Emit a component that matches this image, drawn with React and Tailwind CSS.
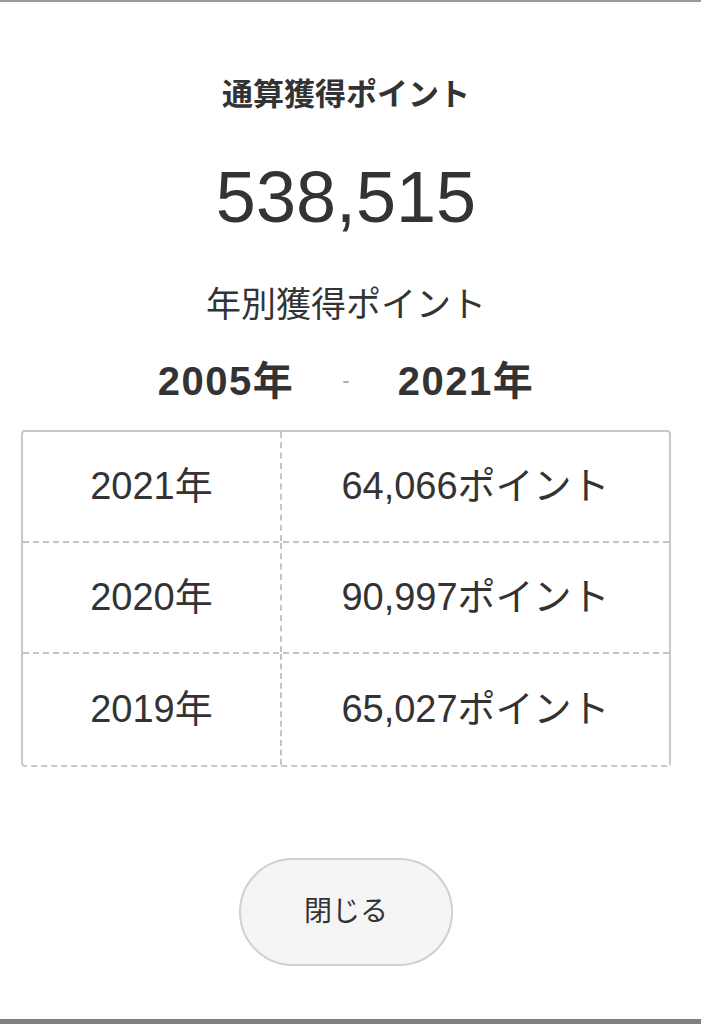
import React from "react";

const rows = [
  ["2021年", "64,066ポイント"],
  ["2020年", "90,997ポイント"],
  ["2019年", "65,027ポイント"],
];

export default function App() {
  return (
    <div
      className="w-[701px] h-[1024px] bg-white flex flex-col text-[#333]"
      style={{ fontFamily: '"Liberation Sans", "Noto Sans CJK JP", sans-serif' }}
    >
      <div className="h-[2px] bg-[#9a9a9a] shrink-0" />
      <div className="w-[692px] flex flex-col items-center">
        <div className="mt-[69px] text-[31px] leading-[47px] font-bold">通算獲得ポイント</div>
        <div className="mt-[43px] text-[72px] leading-[72px]">538,515</div>
        <div className="mt-[45px] text-[35px] leading-[54px]">年別獲得ポイント</div>
        <div className="mt-[19px] flex items-center text-[40px] leading-[60px] font-bold">
          <span className="tracking-[1.5px]">2005年</span>
          <span className="mx-[48px] text-[22px] font-normal text-[#aaa]">-</span>
          <span className="tracking-[1.5px]">2021年</span>
        </div>
        <div className="mt-[19px] w-[650px] border-2 border-[#c8c8c8] rounded-[4px] [border-bottom-style:dashed]">
          {rows.map(([y, p], i) => (
            <div
              key={y}
              className={
                "flex h-[111px] text-[38px] " +
                (i < rows.length - 1 ? "border-b-2 border-dashed border-[#c4c4c4]" : "")
              }
            >
              <div className="w-[259px] flex items-center justify-center border-r-2 border-dashed border-[#c4c4c4]">
                {y}
              </div>
              <div className="flex-1 flex items-center justify-center">{p}</div>
            </div>
          ))}
        </div>
        <button className="mt-[91px] w-[214px] h-[108px] rounded-full bg-[#f5f5f5] border-2 border-[#d0d0d0] text-[28px] text-[#333] flex items-center justify-center">
          閉じる
        </button>
      </div>
      <div className="mt-auto h-[5px] bg-[#808080] shrink-0" />
    </div>
  );
}
